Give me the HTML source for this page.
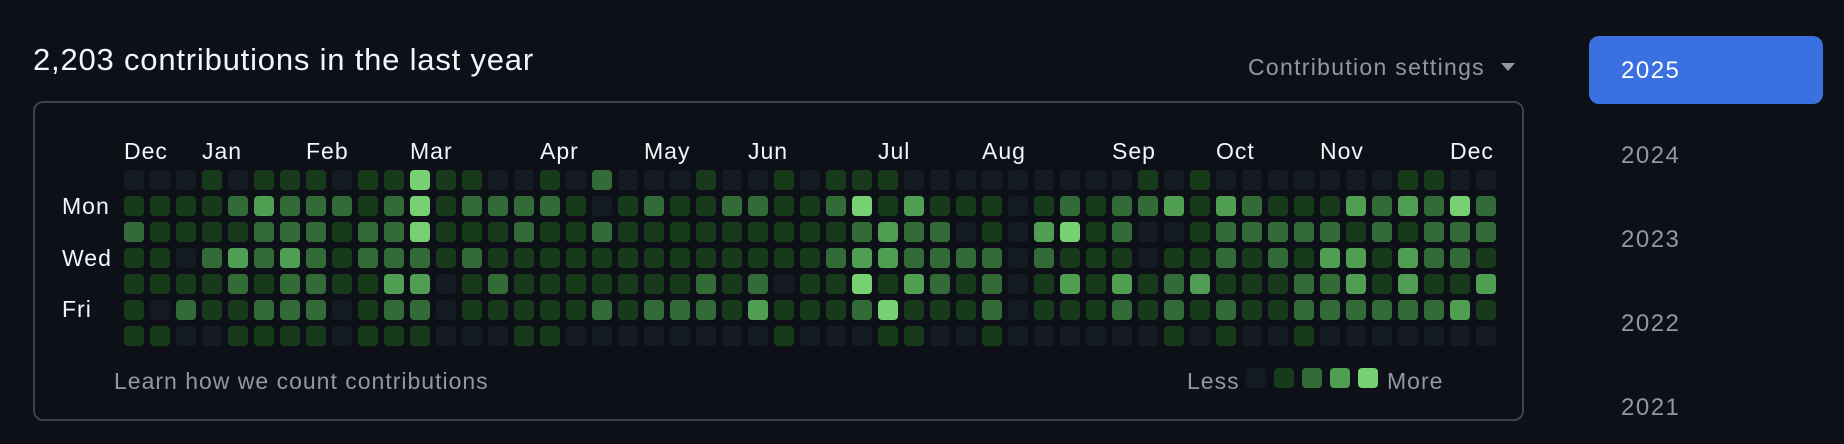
<!DOCTYPE html>
<html><head><meta charset="utf-8"><style>
*{margin:0;padding:0;box-sizing:border-box}
body{width:1844px;height:444px;background:#0d1117;font-family:"Liberation Sans",Arial,sans-serif;position:relative;overflow:hidden;color:#f0f6fc}
.a{position:absolute;white-space:nowrap;line-height:1}
.box{position:absolute;left:33px;top:101px;width:1491px;height:320px;border:2px solid #3d444d;border-radius:10px}
.c{position:absolute;width:20px;height:20px;border-radius:4px}
.l0{background:#151b23}.l1{background:#163a1a}.l2{background:#336b37}.l3{background:#4f9e52}.l4{background:#77d173}
.m{font-size:23px;letter-spacing:1px;color:#f0f6fc}
.g{color:#9198a1}
.f{font-size:23px;letter-spacing:1px}
.yr{position:absolute;left:1621px;font-size:24px;letter-spacing:1.5px;color:#9198a1;line-height:1}
</style></head><body>
<div class="a" style="left:33px;top:44px;font-size:31px;letter-spacing:0.8px">2,203 contributions in the last year</div>
<div class="a g" style="left:1248px;top:56px;font-size:23px;letter-spacing:1.3px">Contribution settings</div>
<svg class="a" style="left:1501px;top:63px" width="14" height="9"><path d="M0 0H14L7 8Z" fill="#9198a1"/></svg>
<div class="box"></div>
<div class="a m" style="left:124px;top:140px">Dec</div>
<div class="a m" style="left:202px;top:140px">Jan</div>
<div class="a m" style="left:306px;top:140px">Feb</div>
<div class="a m" style="left:410px;top:140px">Mar</div>
<div class="a m" style="left:540px;top:140px">Apr</div>
<div class="a m" style="left:644px;top:140px">May</div>
<div class="a m" style="left:748px;top:140px">Jun</div>
<div class="a m" style="left:878px;top:140px">Jul</div>
<div class="a m" style="left:982px;top:140px">Aug</div>
<div class="a m" style="left:1112px;top:140px">Sep</div>
<div class="a m" style="left:1216px;top:140px">Oct</div>
<div class="a m" style="left:1320px;top:140px">Nov</div>
<div class="a m" style="left:1450px;top:140px">Dec</div>
<div class="a m" style="left:62px;top:195px">Mon</div>
<div class="a m" style="left:62px;top:247px">Wed</div>
<div class="a m" style="left:62px;top:298px">Fri</div>
<div id="grid"></div>
<div class="a g f" style="left:114px;top:370px">Learn how we count contributions</div>
<div class="a g f" style="left:1187px;top:370px">Less</div>
<div class="c l0" style="left:1246px;top:368px"></div>
<div class="c l1" style="left:1274px;top:368px"></div>
<div class="c l2" style="left:1302px;top:368px"></div>
<div class="c l3" style="left:1330px;top:368px"></div>
<div class="c l4" style="left:1358px;top:368px"></div>
<div class="a g f" style="left:1387px;top:370px">More</div>
<div style="position:absolute;left:1589px;top:36px;width:234px;height:68px;background:#3a70e0;border-radius:10px"></div>
<div class="yr" style="top:59px;color:#fff">2025</div>
<div class="yr" style="top:144px">2024</div>
<div class="yr" style="top:228px">2023</div>
<div class="yr" style="top:312px">2022</div>
<div class="yr" style="top:396px">2021</div>
<script>
var R=[
"000101110114110010"+"20001001011100000"+"0"+"000010100000001100 2".replace(/ /g,"").slice(1),
"111123222124122221"+"01211221124131110"+"1"+"21223132111323242",
"211112221224111211"+"21111111112322010"+"3"+"41200122222121222",
"110232321222121111"+"11111111123322220"+"2"+"11101121213313221",
"111121221133012111"+"11112120114132120"+"1"+"31312311122313113",
"102112220122011111"+"21222131112411120"+"1"+"11212121122222231",
"110011110111000110"+"00000001000110010"+"0"+"00001010010000000"];
var h="";
for(var r=0;r<7;r++){var s=R[r];for(var c=0;c<53&&c<s.length;c++){h+='<div class="c l'+s[c]+'" style="left:'+(124+26*c)+'px;top:'+(170+26*r)+'px"></div>';}}
document.getElementById("grid").innerHTML=h;
</script>
</body></html>
